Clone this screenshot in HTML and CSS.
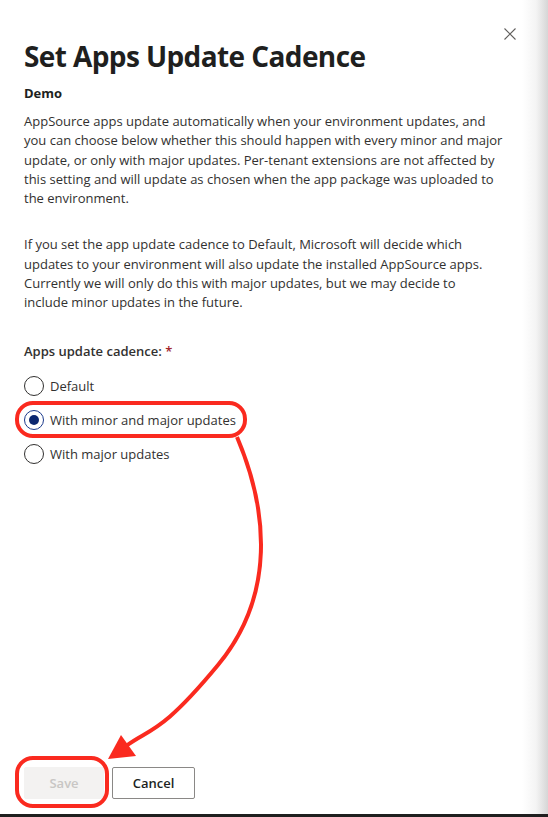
FILE: index.html
```html
<!DOCTYPE html>
<html lang="en">
<head>
<meta charset="utf-8">
<title>Set Apps Update Cadence</title>
<link rel="stylesheet" href="styles.css">
</head>
<body>
<div class="panel">
  <div class="header">
    <h1 class="title">Set Apps Update Cadence</h1>
    <button class="close" aria-label="Close">
      <svg width="12" height="12" viewBox="0 0 12 12"><path d="M0.5 0.5 L11.5 11.5 M11.5 0.5 L0.5 11.5" stroke="#605e5c" stroke-width="1.1" fill="none"/></svg>
    </button>
  </div>
  <div class="subtitle">Demo</div>
  <p class="text">AppSource apps update automatically when your environment updates, and you can choose below whether this should happen with every minor and major update, or only with major updates. Per-tenant extensions are not affected by this setting and will update as chosen when the app package was uploaded to the environment.</p>
  <p class="text second">If you set the app update cadence to Default, Microsoft will decide which updates to your environment will also update the installed AppSource apps. Currently we will only do this with major updates, but we may decide to<br>include minor updates in the future.</p>
  <div class="field-label">Apps update cadence: <span class="req">*</span></div>
  <div class="options">
    <div class="option"><span class="radio"></span><span>Default</span></div>
    <div class="option"><span class="radio checked"></span><span>With minor and major updates</span></div>
    <div class="option"><span class="radio"></span><span>With major updates</span></div>
  </div>
  <div class="spacer"></div>
  <div class="footer">
    <button class="btn save" disabled>Save</button>
    <button class="btn cancel">Cancel</button>
  </div>
</div>
<svg class="annotations" width="548" height="817" viewBox="0 0 548 817">
  <rect x="17" y="403" width="228" height="33" rx="16" fill="none" stroke="#fa2a1f" stroke-width="4"/>
  <rect x="17" y="758" width="90" height="48" rx="16" fill="none" stroke="#fa2a1f" stroke-width="4"/>
  <path d="M237 437 C268 510 276 595 218 665 S150 728 126 746" fill="none" stroke="#fa2a1f" stroke-width="4"/>
  <polygon points="108,759 121,735 136,756" fill="#fa2a1f"/>
</svg>
</body>
</html>
```
FILE: styles.css
```css
* { box-sizing: border-box; }
html, body { margin: 0; padding: 0; }
body {
  position: relative;
  width: 548px;
  height: 817px;
  overflow: hidden;
  font-family: "Open Sans", "Noto Sans", sans-serif;
  color: #323130;
  background: linear-gradient(to right, #ffffff 0, #ffffff 522px, #f4f4f4 536px, #d6d6d6 548px);
  border-bottom: 3px solid #1f1f1f;
}
.panel {
  height: 100%;
  display: flex;
  flex-direction: column;
  padding: 0 24px 15px 24px;
}
.header {
  display: flex;
  justify-content: space-between;
  align-items: flex-start;
}
.title {
  margin: 38px 0 0 0;
  font-size: 28px;
  line-height: 36px;
  font-weight: 700;
  color: #201f1e;
  letter-spacing: -0.6px;
}
.close {
  margin: 28px 8px 0 0;
  padding: 0;
  border: 0;
  background: transparent;
  width: 12px;
  height: 12px;
  display: flex;
}
.subtitle {
  margin-top: 10px;
  font-size: 13px;
  line-height: 19px;
  font-weight: 700;
  color: #201f1e;
}
.text {
  margin: 9px 0 0 0;
  max-width: 481px;
  font-size: 13px;
  line-height: 19.3px;
}
.text.second { margin-top: 27px; }
.field-label {
  margin-top: 28px;
  font-size: 13px;
  line-height: 20px;
  font-weight: 600;
}
.req { color: #a4262c; }
.options {
  margin-top: 15px;
  display: flex;
  flex-direction: column;
  gap: 14px;
}
.option {
  display: flex;
  align-items: center;
  gap: 6px;
  font-size: 13px;
  line-height: 20px;
}
.radio {
  width: 20px;
  height: 20px;
  border-radius: 50%;
  border: 1px solid #323130;
  display: flex;
  align-items: center;
  justify-content: center;
  flex: none;
}
.radio.checked { border-color: #1b3a8c; }
.radio.checked::after {
  content: "";
  width: 10px;
  height: 10px;
  border-radius: 50%;
  background: #0b2770;
}
.spacer { flex: 1; }
.footer {
  display: flex;
  gap: 8px;
}
.btn {
  height: 32px;
  min-width: 80px;
  padding: 0 16px;
  border-radius: 2px;
  font-family: inherit;
  font-size: 13px;
  font-weight: 600;
}
.save {
  background: #f3f2f1;
  color: #c8c6c4;
  border: 1px solid #f3f2f1;
}
.cancel {
  background: #ffffff;
  color: #201f1e;
  border: 1px solid #8a8886;
  min-width: 83px;
}
.annotations {
  position: absolute;
  left: 0;
  top: 0;
  pointer-events: none;
}
```
